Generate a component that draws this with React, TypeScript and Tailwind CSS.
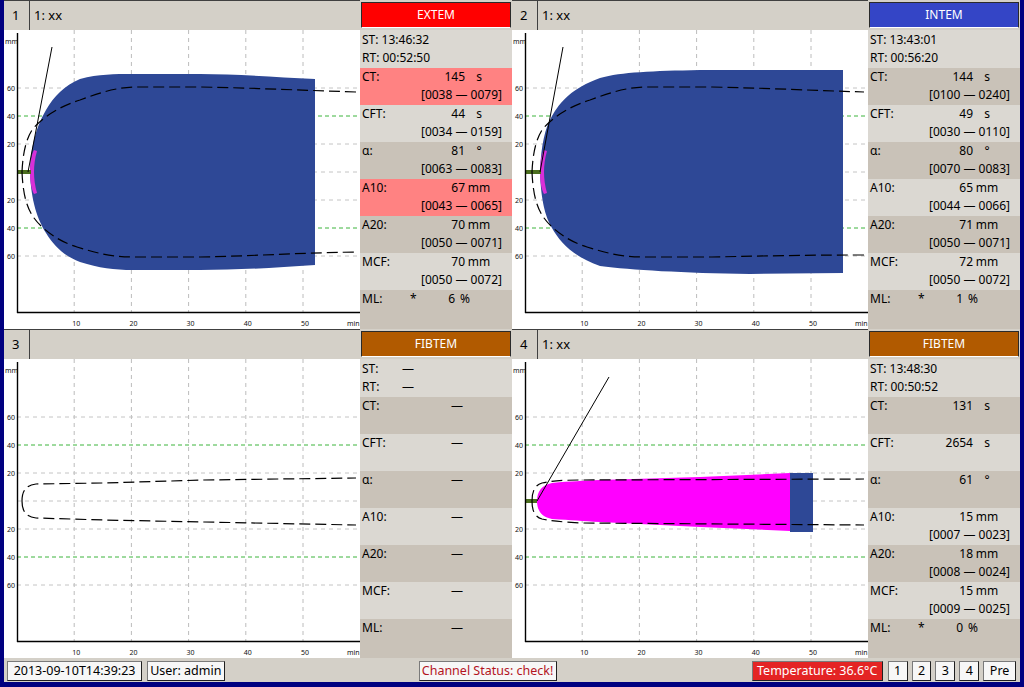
import React from 'react';

type Row = {
  label: string;
  value?: string;
  unit?: string;
  range?: string;
  pink?: boolean;
  ml?: boolean;
  dash?: boolean;
};

type PanelProps = {
  title: string;
  titleCls: string;
  st: string | null;
  rt: string | null;
  rows: Row[];
};

const CY = 142;
const TICKS = [1, 2, 3, 4, 5].map((k) => 13 + 57.2 * k);

function Chart({ children }: { children?: React.ReactNode }) {
  return (
    <svg width="356" height="299" viewBox="0 0 356 299" className="block bg-white">
      {/* grid */}
      {TICKS.map((x) => (
        <line key={x} x1={x} x2={x} y1={0} y2={283} stroke="#bcbcbc" strokeDasharray="4 4" />
      ))}
      {[-84, -28, 0, 28, 84].map((d) => (
        <line key={d} x1={13} x2={356} y1={CY + d} y2={CY + d} stroke="#c4c4c4" strokeDasharray="4 4" />
      ))}
      {[-56, 56].map((d) => (
        <line key={d} x1={13} x2={356} y1={CY + d} y2={CY + d} stroke="#3cb43c" strokeDasharray="4 3" />
      ))}
      {children}
      {/* axes */}
      <line x1={13.5} x2={13.5} y1={3} y2={283} stroke="#000" strokeWidth={1.4} />
      <line x1={13} x2={356} y1={282.5} y2={282.5} stroke="#000" strokeWidth={1.4} />
      <g fontFamily="'Noto Sans', sans-serif" fontSize="7">
        <text x={1} y={14} fill="#111">mm</text>
        {[
          [-84, '60'],
          [-56, '40'],
          [-28, '20'],
          [28, '20'],
          [56, '40'],
          [84, '60'],
        ].map(([d, t]) => (
          <text key={String(d)} x={11} y={CY + (d as number) + 3} textAnchor="end" fill="#111">
            {t}
          </text>
        ))}
        {TICKS.map((x, i) => (
          <text key={x} x={x + 2} y={296} textAnchor="middle" fill="#111">
            {(i + 1) * 10}
          </text>
        ))}
        <text x={343} y={296} fill="#111">min</text>
      </g>
    </svg>
  );
}

function Envelope({ top, bottom }: { top: string; bottom: string }) {
  return (
    <g fill="none" stroke="#000" strokeWidth={1.2} strokeDasharray="11 5">
      <path d={top} />
      <path d={bottom} />
    </g>
  );
}

function ChartExtem() {
  return (
    <Chart>
      <path
        d="M26,142 C27,112 34,94 42,80 C50,66 60,56 76,49 C95,44 110,44 129,44 L196,44 C230,44 270,47 311,49 L311,235 C270,238 230,240 196,240 L129,240 C110,240 95,238 76,232 C60,226 50,216 42,203 C34,190 27,172 26,142 Z"
        fill="#2e4896"
      />
      <path
        d="M26,142 C26,130 28,124 30,120 L33,121 C31,128 30,135 30,142 C30,149 31,156 33,163 L30,164 C28,160 26,154 26,142 Z"
        fill="#d830d8"
      />
      <rect x={14} y={140} width={13} height={4} fill="#4b6e1e" />
      <Envelope
        top="M18,142 C19,120 23,108 28,100 C34,92 50,78 76,70 C95,63 110,58 129,57 L196,57 C250,58 290,60 352,62"
        bottom="M18,142 C19,165 23,177 28,185 C34,195 50,210 73,217 C95,224 110,227 129,227 L196,227 C250,226 290,223 352,222"
      />
      <line x1={24} y1={142} x2={48} y2={17} stroke="#000" strokeWidth={1} />
    </Chart>
  );
}

function ChartIntem() {
  return (
    <Chart>
      <path
        d="M28,142 C29,115 33,98 40,86 C48,72 60,58 88,48 C110,42 140,41 188,40 L331,40 L331,243 L238,244 C170,243 120,240 88,236 C60,226 48,212 40,198 C33,186 29,170 28,142 Z"
        fill="#2e4896"
      />
      <path
        d="M28,142 C28,130 30,124 32,120 L35,121 C33,128 32,135 32,142 C32,149 33,156 35,163 L32,164 C30,160 28,154 28,142 Z"
        fill="#d830d8"
      />
      <rect x={14} y={140} width={15} height={4} fill="#4b6e1e" />
      <Envelope
        top="M20,142 C21,120 25,108 30,100 C36,92 52,78 78,70 C97,63 112,58 131,57 L200,57 C250,58 290,60 352,62"
        bottom="M20,142 C21,165 25,177 30,185 C36,195 52,210 75,217 C97,224 112,227 131,227 L200,227 C250,226 290,225 352,225"
      />
      <line x1={28} y1={142} x2={51} y2={17} stroke="#000" strokeWidth={1} />
    </Chart>
  );
}

function ChartEmpty() {
  return (
    <Chart>
      <Envelope
        top="M18,142 C18,132 22,126 32,125 L100,124 L200,121 L352,119"
        bottom="M18,142 C18,152 22,158 32,159 L100,161 L200,163 L352,166"
      />
    </Chart>
  );
}

function ChartFib() {
  return (
    <Chart>
      <path
        d="M25,142 C25,132 30,126 40,124 C60,122 70,122 88,121 L188,118 L278,114 L278,172 L188,168 L88,163 C70,162 60,161 40,160 C30,158 25,152 25,142 Z"
        fill="#ff00ff"
      />
      <rect x={278} y={114} width={23} height={59} fill="#2e4896" />
      <rect x={14} y={140} width={11} height={4} fill="#4b6e1e" />
      <Envelope
        top="M20,142 C20,132 23,126 30,124 C40,122 50,121 70,121 L352,120"
        bottom="M20,142 C20,152 23,158 30,160 C40,162 50,163 70,164 L352,166"
      />
      <line x1={25} y1={142} x2={97} y2={18} stroke="#000" strokeWidth={1} />
    </Chart>
  );
}

function DataPanel({ title, titleCls, st, rt, rows }: PanelProps) {
  return (
    <div className="flex w-[152px] flex-col bg-[#d4d0c8] text-[12px] text-black">
      <div className="h-[30px] px-px pt-[2px]">
        <div
          className={`flex h-[26px] items-center justify-center border border-[#2a2a2a] border-b-white text-[12px] text-white ${titleCls}`}
        >
          {title}
        </div>
      </div>
      <div className="h-[38px] bg-[#dbd8d2] pt-px leading-[18px]">
        <div className="flex h-[18px] pl-[2px]">
          {st ? `ST: ${st}` : (
            <>
              <span className="w-[40px]">ST:</span>—
            </>
          )}
        </div>
        <div className="flex h-[18px] pl-[2px]">
          {rt ? `RT: ${rt}` : (
            <>
              <span className="w-[40px]">RT:</span>—
            </>
          )}
        </div>
      </div>
      {rows.map((r, i) => {
        const bg = r.pink ? 'bg-[#ff8282]' : i % 2 === 0 ? 'bg-[#c9c2b8]' : 'bg-[#dbd8d2]';
        const last = i === rows.length - 1;
        return (
          <div key={r.label} className={`${last ? 'flex-1' : 'h-[37px]'} ${bg} leading-[18px]`}>
            <div className="flex h-[18px]">
              <span className="w-[50px] pl-[2px]">{r.label}</span>
              {r.dash ? (
                <span className="w-[53px] text-right">—</span>
              ) : r.ml ? (
                <>
                  <span className="w-[10px]">*</span>
                  <span className="w-[35px] text-right">{r.value}</span>
                  <span className="pl-[5px]">{r.unit}</span>
                </>
              ) : (
                <>
                  <span className="w-[55px] text-right">{r.value}</span>
                  <span className="w-[28px] text-center">{r.unit}</span>
                </>
              )}
            </div>
            {r.range && <div className="h-[18px] pr-[10px] text-right">{r.range}</div>}
          </div>
        );
      })}
    </div>
  );
}

function Quadrant({ num, label, chart, panel }: { num: string; label: string; chart: React.ReactNode; panel: React.ReactNode }) {
  return (
    <div className="flex h-[329px] w-[508px]">
      <div className="flex w-[356px] flex-col">
        <div className="flex h-[30px] border-t border-[#404040] bg-[#d4d0c8] text-[13px]">
          <div className="w-[25px] pl-[8px] leading-[29px]">{num}</div>
          <div className="flex-1 border-l border-[#404040] pl-[4px] leading-[29px]">{label}</div>
        </div>
        <div className="h-[299px] bg-white">{chart}</div>
      </div>
      {panel}
    </div>
  );
}

const dashRows: Row[] = ['CT:', 'CFT:', 'α:', 'A10:', 'A20:', 'MCF:', 'ML:'].map((l) => ({ label: l, dash: true }));

function BarButton({ children, cls = '' }: { children: React.ReactNode; cls?: string }) {
  return (
    <div
      className={`flex h-[20px] items-center justify-center whitespace-nowrap border border-[#7a7a7a] border-r-[#202020] border-b-[#202020] text-[12.5px] leading-none ${cls}`}
    >
      {children}
    </div>
  );
}

export default function App() {
  return (
    <div className="h-[687px] w-[1024px] overflow-hidden bg-[#000080] px-[4px] pb-[5px] font-['Noto_Sans',sans-serif]">
      <div className="grid grid-cols-2">
        <Quadrant
          num="1"
          label="1: xx"
          chart={<ChartExtem />}
          panel={
            <DataPanel
              title="EXTEM"
              titleCls="bg-[#ff0000]"
              st="13:46:32"
              rt="00:52:50"
              rows={[
                { label: 'CT:', value: '145', unit: 's', range: '[0038 — 0079]', pink: true },
                { label: 'CFT:', value: '44', unit: 's', range: '[0034 — 0159]' },
                { label: 'α:', value: '81', unit: '°', range: '[0063 — 0083]' },
                { label: 'A10:', value: '67', unit: 'mm', range: '[0043 — 0065]', pink: true },
                { label: 'A20:', value: '70', unit: 'mm', range: '[0050 — 0071]' },
                { label: 'MCF:', value: '70', unit: 'mm', range: '[0050 — 0072]' },
                { label: 'ML:', value: '6', unit: '%', ml: true },
              ]}
            />
          }
        />
        <Quadrant
          num="2"
          label="1: xx"
          chart={<ChartIntem />}
          panel={
            <DataPanel
              title="INTEM"
              titleCls="bg-[#3445c6]"
              st="13:43:01"
              rt="00:56:20"
              rows={[
                { label: 'CT:', value: '144', unit: 's', range: '[0100 — 0240]' },
                { label: 'CFT:', value: '49', unit: 's', range: '[0030 — 0110]' },
                { label: 'α:', value: '80', unit: '°', range: '[0070 — 0083]' },
                { label: 'A10:', value: '65', unit: 'mm', range: '[0044 — 0066]' },
                { label: 'A20:', value: '71', unit: 'mm', range: '[0050 — 0071]' },
                { label: 'MCF:', value: '72', unit: 'mm', range: '[0050 — 0072]' },
                { label: 'ML:', value: '1', unit: '%', ml: true },
              ]}
            />
          }
        />
        <Quadrant
          num="3"
          label=""
          chart={<ChartEmpty />}
          panel={<DataPanel title="FIBTEM" titleCls="bg-[#b15a00]" st={null} rt={null} rows={dashRows} />}
        />
        <Quadrant
          num="4"
          label="1: xx"
          chart={<ChartFib />}
          panel={
            <DataPanel
              title="FIBTEM"
              titleCls="bg-[#b15a00]"
              st="13:48:30"
              rt="00:50:52"
              rows={[
                { label: 'CT:', value: '131', unit: 's' },
                { label: 'CFT:', value: '2654', unit: 's' },
                { label: 'α:', value: '61', unit: '°' },
                { label: 'A10:', value: '15', unit: 'mm', range: '[0007 — 0023]' },
                { label: 'A20:', value: '18', unit: 'mm', range: '[0008 — 0024]' },
                { label: 'MCF:', value: '15', unit: 'mm', range: '[0009 — 0025]' },
                { label: 'ML:', value: '0', unit: '%', ml: true },
              ]}
            />
          }
        />
      </div>

      {/* status bar */}
      <div className="flex h-[24px] items-start bg-[#d4d0c8] pt-[3px] pr-[4px] pl-[3px]">
        <BarButton cls="w-[136px] bg-[#f7f7f7]">2013-09-10T14:39:23</BarButton>
        <BarButton cls="ml-[5px] w-[78px] bg-[#f7f7f7]">User: admin</BarButton>
        <BarButton cls="ml-[194px] w-[139px] bg-[#f7f7f7] text-[#b3141e]">Channel Status: check!</BarButton>
        <BarButton cls="ml-[195px] w-[132px] bg-[#e42424] text-white">Temperature: 36.6°C</BarButton>
        <BarButton cls="ml-[5px] w-[20px] bg-[#f7f7f7]">1</BarButton>
        <BarButton cls="ml-[4px] w-[20px] bg-[#f7f7f7]">2</BarButton>
        <BarButton cls="ml-[4px] w-[20px] bg-[#f7f7f7]">3</BarButton>
        <BarButton cls="ml-[4px] w-[20px] bg-[#f7f7f7]">4</BarButton>
        <BarButton cls="ml-[4px] w-[33px] bg-[#f7f7f7]">Pre</BarButton>
      </div>
    </div>
  );
}
